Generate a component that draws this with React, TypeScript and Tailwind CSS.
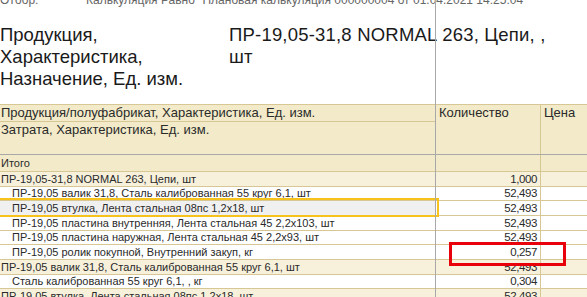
import React from "react";

type Row = {
  name: string;
  qty: string;
  kind: "total" | "group" | "child";
  h: number;
  selected?: boolean;
  red?: boolean;
};

const rows: Row[] = [
  { name: "Итого", qty: "", kind: "total", h: 17 },
  { name: "ПР-19,05-31,8 NORMAL 263, Цепи, шт", qty: "1,000", kind: "group", h: 15 },
  { name: "ПР-19,05 валик 31,8, Сталь калиброванная 55 круг 6,1, шт", qty: "52,493", kind: "child", h: 14 },
  { name: "ПР-19,05 втулка, Лента стальная 08пс 1,2х18, шт", qty: "52,493", kind: "child", h: 15, selected: true },
  { name: "ПР-19,05 пластина внутренняя, Лента стальная 45 2,2х103, шт", qty: "52,493", kind: "child", h: 15 },
  { name: "ПР-19,05 пластина наружная, Лента стальная 45 2,2х93, шт", qty: "52,493", kind: "child", h: 14 },
  { name: "ПР-19,05 ролик покупной, Внутренний закуп, кг", qty: "0,257", kind: "child", h: 15, red: true },
  { name: "ПР-19,05 валик 31,8, Сталь калиброванная 55 круг 6,1, шт", qty: "52,493", kind: "group", h: 15 },
  { name: "Сталь калиброванная 55 круг 6,1, , кг", qty: "0,304", kind: "child", h: 14 },
  { name: "ПР-19,05 втулка, Лента стальная 08пс 1,2х18, шт", qty: "52,493", kind: "group", h: 15 },
];

function bgFor(kind: Row["kind"]) {
  if (kind === "total") return "bg-[#f2eac8]";
  if (kind === "group") return "bg-[#f7f1dc]";
  return "bg-white";
}

export default function App() {
  return (
    <div
      className="relative w-[587px] h-[297px] overflow-hidden bg-white text-[#2a2a2a]"
      style={{ fontFamily: '"Liberation Sans", Arial, sans-serif' }}
    >
      {/* filter line */}
      <div className="-mt-[7px] flex h-[14px] text-[12px] leading-[14px] text-[#666] whitespace-nowrap">
        <div className="w-[86px]">Отбор:</div>
        <div>Калькуляция Равно "Плановая калькуляция 000000004 от 01.04.2021 14:25:04"</div>
      </div>

      {/* big header */}
      <div className="mt-[17px] flex text-[18.5px] leading-[22px] text-[#1a1a1a]">
        <div className="w-[229px]">
          Продукция,
          <br />
          Характеристика,
          <br />
          Назначение, Ед. изм.
        </div>
        <div className="whitespace-nowrap tracking-[0.2px]">
          ПР-19,05-31,8 NORMAL 263, Цепи, ,
          <br />
          шт
        </div>
      </div>

      {/* table */}
      <div className="mt-[14px] border-t border-[#d6c794] text-[#2a2a2a]">
        {/* header */}
        <div className="flex bg-[#f2eac8] text-[13px] leading-[16px] border-b border-[#a8a8a8]">
          <div className="w-[436px] flex flex-col">
            <div className="h-[17px] pl-[1px] border-b border-[#d6c794] whitespace-nowrap">
              Продукция/полуфабрикат, Характеристика, Ед. изм.
            </div>
            <div className="h-[32px] pl-[1px] whitespace-nowrap">
              Затрата, Характеристика, Ед. изм.
            </div>
          </div>
          <div className="w-[105px] pl-[3px] border-r border-[#d6c794]">Количество</div>
          <div className="flex-1 pl-[3px]">Цена</div>
        </div>

        {/* body */}
        {rows.map((r, i) => (
          <div
            key={i}
            className={`relative flex text-[11px] border-b border-[#d6c794] ${bgFor(r.kind)}`}
            style={{ height: r.h, lineHeight: `${r.h - 1}px` }}
          >
            <div
              className={`w-[436px] whitespace-nowrap overflow-hidden ${
                r.kind === "child" ? "pl-[12px]" : "pl-[1px]"
              } ${r.selected ? "bg-[#f0f0f0]" : ""}`}
            >
              {r.name}
            </div>
            <div className="w-[105px] pr-[3px] text-[11.5px] tracking-[-0.4px] text-right border-r border-[#d6c794]">
              {r.qty}
            </div>
            <div className="flex-1" />
            {r.selected && (
              <div className="absolute z-10 left-[-2px] top-[-3px] bottom-[-2px] w-[441px] border-2 border-[#f8c21c] pointer-events-none" />
            )}
            {r.red && (
              <div className="absolute z-10 left-[449px] top-[-3px] w-[117px] h-[24px] border-[3px] border-[#e8000b] pointer-events-none" />
            )}
          </div>
        ))}
      </div>

      {/* frozen column separator */}
      <div className="absolute z-20 left-[435px] top-0 bottom-0 w-px bg-[#a8a8a8] pointer-events-none" />
    </div>
  );
}
